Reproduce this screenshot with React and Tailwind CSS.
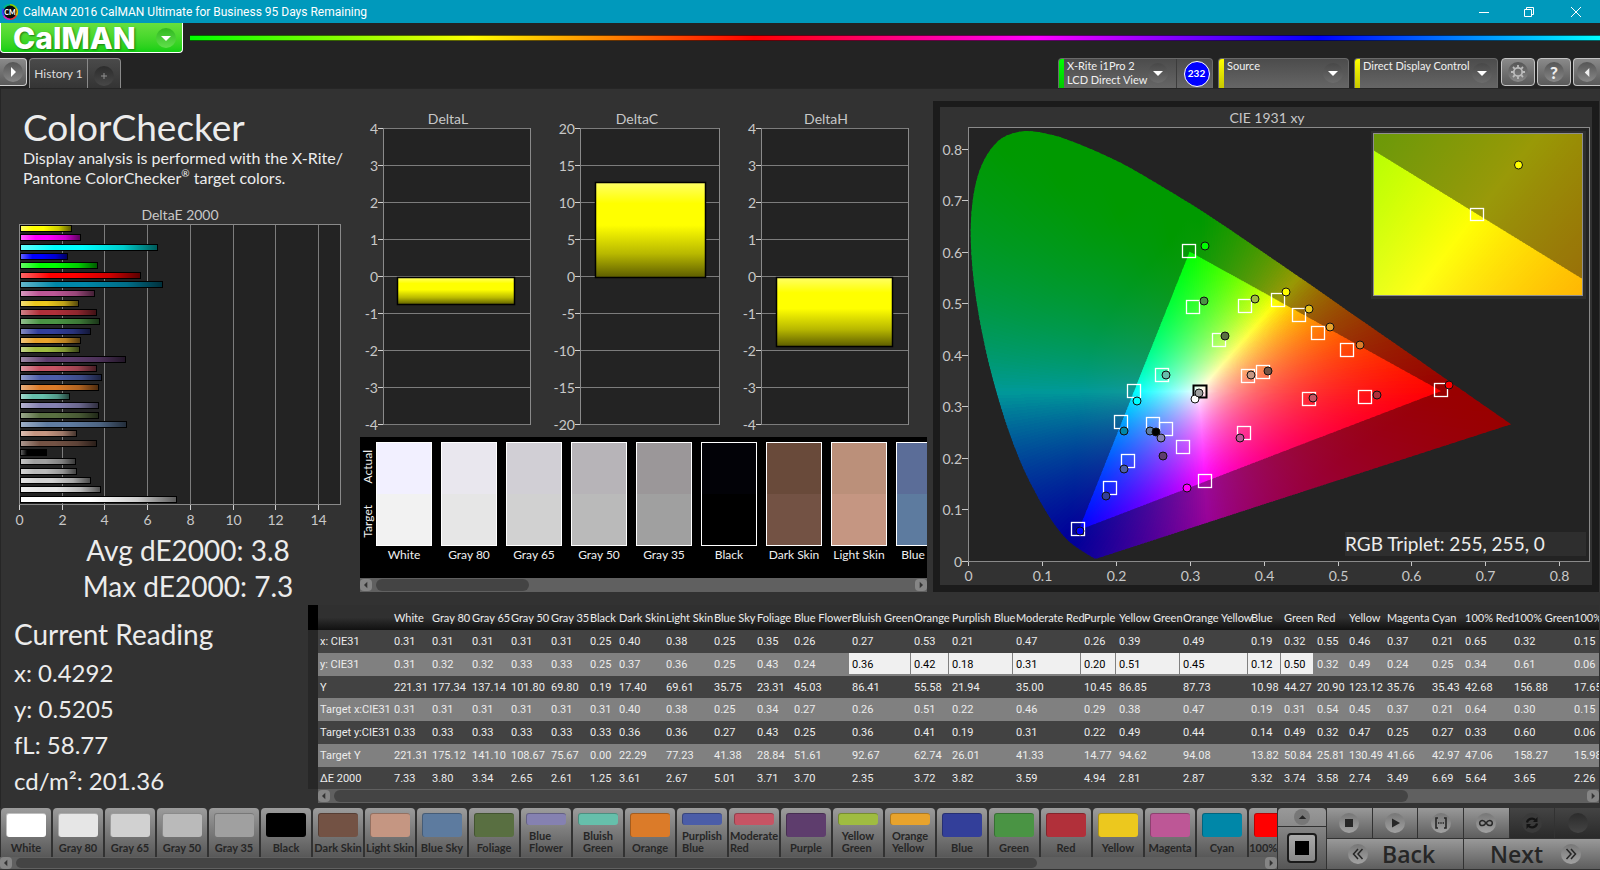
import React from "react";

/* ---------- data ---------- */

const COLUMNS = [
  { name: "White", w: "w-[38px]", v: ["0.31", "0.31", "221.31", "0.31", "0.33", "221.31", "7.33"] },
  { name: "Gray 80", w: "w-[40px]", v: ["0.31", "0.32", "177.34", "0.31", "0.33", "175.12", "3.80"] },
  { name: "Gray 65", w: "w-[39px]", v: ["0.31", "0.32", "137.14", "0.31", "0.33", "141.10", "3.34"] },
  { name: "Gray 50", w: "w-[40px]", v: ["0.31", "0.33", "101.80", "0.31", "0.33", "108.67", "2.65"] },
  { name: "Gray 35", w: "w-[39px]", v: ["0.31", "0.33", "69.80", "0.31", "0.33", "75.67", "2.61"] },
  { name: "Black", w: "w-[29px]", v: ["0.25", "0.25", "0.19", "0.31", "0.33", "0.00", "1.25"] },
  { name: "Dark Skin", w: "w-[47px]", v: ["0.40", "0.37", "17.40", "0.40", "0.36", "22.29", "3.61"] },
  { name: "Light Skin", w: "w-[48px]", v: ["0.38", "0.36", "69.61", "0.38", "0.36", "77.23", "2.67"] },
  { name: "Blue Sky", w: "w-[43px]", v: ["0.25", "0.25", "35.75", "0.25", "0.27", "41.38", "5.01"] },
  { name: "Foliage", w: "w-[37px]", v: ["0.35", "0.43", "23.31", "0.34", "0.43", "28.84", "3.71"] },
  { name: "Blue Flower", w: "w-[58px]", v: ["0.26", "0.24", "45.03", "0.27", "0.25", "51.61", "3.70"] },
  { name: "Bluish Green", w: "w-[62px]", sel: true, v: ["0.27", "0.36", "86.41", "0.26", "0.36", "92.67", "2.35"] },
  { name: "Orange", w: "w-[38px]", sel: true, v: ["0.53", "0.42", "55.58", "0.51", "0.41", "62.74", "3.72"] },
  { name: "Purplish Blue", w: "w-[64px]", sel: true, v: ["0.21", "0.18", "21.94", "0.22", "0.19", "26.01", "3.82"] },
  { name: "Moderate Red", w: "w-[68px]", sel: true, v: ["0.47", "0.31", "35.00", "0.46", "0.31", "41.33", "3.59"] },
  { name: "Purple", w: "w-[35px]", sel: true, v: ["0.26", "0.20", "10.45", "0.29", "0.22", "14.77", "4.94"] },
  { name: "Yellow Green", w: "w-[64px]", sel: true, v: ["0.39", "0.51", "86.85", "0.38", "0.49", "94.62", "2.81"] },
  { name: "Orange Yellow", w: "w-[68px]", sel: true, v: ["0.49", "0.45", "87.73", "0.47", "0.44", "94.08", "2.87"] },
  { name: "Blue", w: "w-[33px]", sel: true, v: ["0.19", "0.12", "10.98", "0.19", "0.14", "13.82", "3.32"] },
  { name: "Green", w: "w-[33px]", sel: true, v: ["0.32", "0.50", "44.27", "0.31", "0.49", "50.84", "3.74"] },
  { name: "Red", w: "w-[32px]", v: ["0.55", "0.32", "20.90", "0.54", "0.32", "25.81", "3.58"] },
  { name: "Yellow", w: "w-[38px]", v: ["0.46", "0.49", "123.12", "0.45", "0.47", "130.49", "2.74"] },
  { name: "Magenta", w: "w-[45px]", v: ["0.37", "0.24", "35.76", "0.37", "0.25", "41.66", "3.49"] },
  { name: "Cyan", w: "w-[33px]", v: ["0.21", "0.25", "35.43", "0.21", "0.27", "42.97", "6.69"] },
  { name: "100% Red", w: "w-[49px]", v: ["0.65", "0.34", "42.68", "0.64", "0.33", "47.06", "5.64"] },
  { name: "100% Green", w: "w-[60px]", v: ["0.32", "0.61", "156.88", "0.30", "0.60", "158.27", "3.65"] },
  { name: "100% Blue", w: "w-[60px]", v: ["0.15", "0.06", "17.65", "0.15", "0.06", "15.98", "2.26"] },
];

const ROWS = [
  { label: "x: CIE31", cls: "h-[23px] bg-[#424242]" },
  { label: "y: CIE31", cls: "h-[23px] bg-[#808080]" },
  { label: "Y", cls: "h-[22px] bg-[#424242]" },
  { label: "Target x:CIE31", cls: "h-[23px] bg-[#808080]" },
  { label: "Target y:CIE31", cls: "h-[23px] bg-[#424242]" },
  { label: "Target Y", cls: "h-[23px] bg-[#808080]" },
  { label: "ΔE 2000", cls: "h-[22px] bg-[#424242]" },
];

const DELTA_E = [
  ["#ffff00", 2.43], ["#ff00ff", 2.87], ["#00ffff", 6.48], ["#0000ff", 2.26], ["#00ff00", 3.65],
  ["#ff0000", 5.64], ["#0087a8", 6.69], ["#bd5796", 3.49], ["#ecc81e", 2.74], ["#b1303a", 3.58],
  ["#4a9444", 3.74], ["#333f9a", 3.32], ["#e8a32c", 2.87], ["#9fbc41", 2.81], ["#5e3d6d", 4.94],
  ["#c65464", 3.59], ["#4b5da8", 3.82], ["#db7b29", 3.72], ["#66bfab", 2.35], ["#8581b1", 3.7],
  ["#596f41", 3.71], ["#607da2", 5.01], ["#c59682", 2.67], ["#735244", 3.61], ["#000000", 1.25],
  ["#a0a0a0", 2.61], ["#bababa", 2.65], ["#d1d1d1", 3.34], ["#e6e6e6", 3.8], ["#ffffff", 7.33],
];

const PATCHES = [
  { name: "White", c: "bg-white" },
  { name: "Gray 80", c: "bg-[#e6e6e6]" },
  { name: "Gray 65", c: "bg-[#d1d1d1]" },
  { name: "Gray 50", c: "bg-[#bababa]" },
  { name: "Gray 35", c: "bg-[#a0a0a0]" },
  { name: "Black", c: "bg-black" },
  { name: "Dark Skin", c: "bg-[#735244]" },
  { name: "Light Skin", c: "bg-[#c59682]" },
  { name: "Blue Sky", c: "bg-[#5d7b9f]" },
  { name: "Foliage", c: "bg-[#596f41]" },
  { name: "Blue Flower", c: "bg-[#8581b1]", two: true },
  { name: "Bluish Green", c: "bg-[#66bfab]", two: true },
  { name: "Orange", c: "bg-[#db7b29]" },
  { name: "Purplish Blue", c: "bg-[#4b5da8]", two: true },
  { name: "Moderate Red", c: "bg-[#c65464]", two: true },
  { name: "Purple", c: "bg-[#5e3d6d]" },
  { name: "Yellow Green", c: "bg-[#9fbc41]", two: true },
  { name: "Orange Yellow", c: "bg-[#e8a32c]", two: true },
  { name: "Blue", c: "bg-[#333f9a]" },
  { name: "Green", c: "bg-[#4a9444]" },
  { name: "Red", c: "bg-[#b1303a]" },
  { name: "Yellow", c: "bg-[#ecc81e]" },
  { name: "Magenta", c: "bg-[#bd5796]" },
  { name: "Cyan", c: "bg-[#0087a8]" },
  { name: "100% Red", c: "bg-[#ff0000]" },
];

const SWATCHES = [
  { name: "White", a: "bg-[#f2f0ff]", t: "bg-[#f2f2f2]" },
  { name: "Gray 80", a: "bg-[#e9e7ee]", t: "bg-[#e6e6e6]" },
  { name: "Gray 65", a: "bg-[#d1cfd5]", t: "bg-[#d1d1d1]" },
  { name: "Gray 50", a: "bg-[#b7b4b8]", t: "bg-[#bababa]" },
  { name: "Gray 35", a: "bg-[#9b9799]", t: "bg-[#a0a0a0]" },
  { name: "Black", a: "bg-[#020207]", t: "bg-black" },
  { name: "Dark Skin", a: "bg-[#694a3a]", t: "bg-[#735244]" },
  { name: "Light Skin", a: "bg-[#bb907a]", t: "bg-[#c59682]" },
  { name: "Blue Sky", a: "bg-[#5b6d98]", t: "bg-[#5d7b9f]" },
];

const TARGETS = [
  [249, 144], [253, 200], [305, 199], [279, 233], [222, 268], [194, 284], [181, 315], [213, 317],
  [226, 322], [243, 340], [188, 354], [170, 381], [138, 422], [265, 374], [304, 326], [308, 269],
  [323, 265], [338, 193], [359, 208], [378, 226], [407, 243], [501, 283], [425, 290], [369, 292],
];

const READINGS = [
  [265, 139, "#00ff00"], [264, 194, "#4a9444"], [315, 192, "#9fbc41"], [285, 229, "#596f41"],
  [226, 268, "#66bfab"], [197, 294, "#00ffff"], [184, 324, "#0087a8"], [210, 324, "#607da2"],
  [216, 325, "#000000"], [221, 331, "#8581b1"], [223, 349, "#5e3d6d"], [184, 362, "#4b5da8"],
  [166, 389, "#333f9a"], [140, 424, "#0000ff"], [247, 381, "#ff00ff"], [300, 331, "#bd5796"],
  [311, 268, "#c59682"], [328, 264, "#735244"], [255, 292, "#ffffff"], [259, 286, "#a0a0a0"],
  [346, 185, "#ffff00"], [369, 202, "#ecc81e"], [390, 220, "#e8a32c"], [420, 238, "#db7b29"],
  [509, 278, "#ff0000"], [437, 288, "#b1303a"], [373, 291, "#c65464"],
];

/* ---------- chromaticity geometry ---------- */

const OX = 28;
const OY = 454;
const SX = 739;
const SY = 515.5;
const toPx = ([x, y]) => [OX + x * SX, OY - y * SY];
const WHITE_POINT = toPx([0.3127, 0.329]);
const TRIANGLE = [[0.64, 0.33], [0.3, 0.6], [0.15, 0.06]].map(toPx);

const LOCUS = [
  [0.1741, 0.005], [0.1714, 0.0051], [0.1689, 0.0069], [0.1644, 0.0109], [0.1566, 0.0177],
  [0.144, 0.0297], [0.1355, 0.0399], [0.1241, 0.0578], [0.1096, 0.0868], [0.0913, 0.1327],
  [0.0687, 0.2007], [0.0454, 0.295], [0.0235, 0.4127], [0.0082, 0.5384], [0.0039, 0.6548],
  [0.0139, 0.7502], [0.0389, 0.812], [0.0743, 0.8338], [0.1142, 0.8262], [0.1547, 0.8059],
  [0.1929, 0.7816], [0.2296, 0.7543], [0.3016, 0.6923], [0.3731, 0.6245], [0.4441, 0.5547],
  [0.5125, 0.4866], [0.5752, 0.4242], [0.627, 0.3725], [0.6658, 0.334], [0.6915, 0.3083],
  [0.7347, 0.2653],
].map(toPx);

function smoothPath(pts) {
  let d = `M${pts[0][0].toFixed(1)} ${pts[0][1].toFixed(1)}`;
  for (let i = 0; i < pts.length - 1; i++) {
    const p0 = pts[i - 1] || pts[i];
    const p1 = pts[i];
    const p2 = pts[i + 1];
    const p3 = pts[i + 2] || p2;
    const c = [
      p1[0] + (p2[0] - p0[0]) / 6, p1[1] + (p2[1] - p0[1]) / 6,
      p2[0] - (p3[0] - p1[0]) / 6, p2[1] - (p3[1] - p1[1]) / 6,
      p2[0], p2[1],
    ].map((n) => n.toFixed(1));
    d += `C${c.join(" ")}`;
  }
  return d + "Z";
}
const LOCUS_PATH = smoothPath(LOCUS);

function colorAt(px, py, level) {
  const x = (px - OX) / SX;
  const y = Math.max((OY - py) / SY, 0.002);
  const X = x / y;
  const Z = (1 - x - y) / y;
  const lin = [
    3.2406 * X - 1.5372 - 0.4986 * Z,
    -0.9689 * X + 1.8758 + 0.0415 * Z,
    0.0557 * X - 0.204 + 1.057 * Z,
  ].map((c) => Math.max(c, 0));
  const m = Math.max(...lin, 1e-6);
  return `rgb(${lin.map((c) => Math.round((255 * level * c) / m)).join(",")})`;
}

function edgeDistance(a) {
  const [wx, wy] = WHITE_POINT;
  const dx = Math.cos(a);
  const dy = Math.sin(a);
  let best = 1e9;
  TRIANGLE.forEach((p, i) => {
    const q = TRIANGLE[(i + 1) % 3];
    const ex = q[0] - p[0];
    const ey = q[1] - p[1];
    const det = dx * ey - dy * ex;
    if (Math.abs(det) < 1e-9) return;
    const t = ((p[0] - wx) * ey - (p[1] - wy) * ex) / det;
    const s = ((p[0] - wx) * dy - (p[1] - wy) * dx) / det;
    if (t > 0 && s >= -1e-6 && s <= 1 + 1e-6) best = Math.min(best, t);
  });
  return best;
}

function Wedges({ id, from = 0, to = 360, step = 1, level, inner }) {
  const [wx, wy] = WHITE_POINT;
  const items = [];
  for (let deg = from; deg < to; deg += step) {
    const mid = ((deg + step / 2) * Math.PI) / 180;
    const edge = edgeDistance(mid);
    const r0 = inner ? 0 : edge * 0.85;
    const r1 = inner ? edge + 4 : 560;
    const n = inner ? 12 : 8;
    const at = (r, a) => [wx + r * Math.cos(a), wy + r * Math.sin(a)];
    const stops = [];
    for (let k = 0; k <= n; k++) {
      const r = r0 + ((r1 - r0) * k) / n;
      const [x, y] = at(r, mid);
      stops.push(<stop key={k} offset={k / n} stopColor={colorAt(x, y, level)} />);
    }
    const g0 = at(r0, mid);
    const g1 = at(r1, mid);
    const a0 = (deg * Math.PI) / 180;
    const a1 = ((deg + step * 1.4) * Math.PI) / 180;
    const reach = inner ? r1 * 1.15 : r1;
    const key = `${id}-${items.length}`;
    items.push(
      <g key={key}>
        <linearGradient id={key} gradientUnits="userSpaceOnUse" x1={g0[0]} y1={g0[1]} x2={g1[0]} y2={g1[1]}>
          {stops}
        </linearGradient>
        <polygon
          points={[[wx, wy], at(reach, a0), at(reach, a1)].map((p) => p.map((c) => c.toFixed(2)).join(",")).join(" ")}
          fill={`url(#${key})`}
        />
      </g>
    );
  }
  return <g shapeRendering="crispEdges">{items}</g>;
}

/* ---------- charts ---------- */

const TRI_POINTS = TRIANGLE.map((p) => p.join(",")).join(" ");

function CieChart() {
  const zoomCenter = toPx([0.4193, 0.5053]);
  return (
    <svg viewBox="0 0 652 478" className="block w-full" role="img" aria-label="CIE 1931 xy chart">
      <defs>
        <clipPath id="locus"><path d={LOCUS_PATH} /></clipPath>
        <clipPath id="gamut"><polygon points={TRI_POINTS} /></clipPath>
        <clipPath id="inset"><rect x="434" y="27" width="208" height="162" /></clipPath>
      </defs>
      <text x="327" y="16" textAnchor="middle" fontSize="14" fill="#c8c8c8">CIE 1931 xy</text>
      <rect x="28.5" y="20.5" width="621" height="434" fill="#232323" stroke="#8a8a8a" />
      <g clipPath="url(#locus)"><Wedges id="out" level={0.6} /></g>
      <g clipPath="url(#gamut)"><Wedges id="in" level={1} inner /></g>

      {[0, 1, 2, 3, 4, 5, 6, 7, 8].map((i) => {
        const label = i === 0 ? "0" : `0.${i}`;
        const x = Math.round(OX + i * 73.9) + 0.5;
        const y = Math.round(OY - i * 51.55) + 0.5;
        return (
          <g key={i} fill="#c8c8c8" fontSize="14">
            <path d={`M${x} 455v4M22 ${y}h6`} stroke="#c8c8c8" />
            <text x={x} y="474" textAnchor="middle">{label}</text>
            <text x="22" y={y + 5} textAnchor="end">{label}</text>
          </g>
        );
      })}

      <g fill="none" stroke="#fff" strokeWidth="1.3">
        {TARGETS.map(([x, y], i) => <rect key={i} x={x - 6.5} y={y - 6.5} width="13" height="13" />)}
      </g>
      <rect x="253.5" y="278.5" width="13" height="12" fill="none" stroke="#000" strokeWidth="2" />
      <g stroke="#111">
        {READINGS.map(([x, y, c], i) => <circle key={i} cx={x} cy={y} r="4" fill={c} />)}
      </g>

      <rect x="431" y="24" width="215" height="168" fill="#2e2e2e" />
      <g clipPath="url(#inset)">
        <g transform={`translate(537 107) scale(5.67 6.3) translate(${-zoomCenter[0]} ${-zoomCenter[1]})`}>
          <Wedges id="zout" level={0.6} from={292} to={335} step={0.25} />
          <g clipPath="url(#gamut)"><Wedges id="zin" level={1} from={292} to={335} step={0.25} inner /></g>
        </g>
      </g>
      <rect x="433.5" y="26.5" width="209" height="162" fill="none" stroke="#8f8f8f" />
      <rect x="530.5" y="101.5" width="13" height="12" fill="none" stroke="#fff" strokeWidth="1.3" />
      <circle cx="578.5" cy="58" r="4" fill="#ffff00" stroke="#111" />

      <rect x="405" y="425" width="241" height="24" fill="#2e2e2e" />
      <text x="405" y="444" fontSize="19" fill="#ececec">RGB Triplet: 255, 255, 0</text>
    </svg>
  );
}

function DeltaEChart() {
  const unit = 21.37;
  return (
    <svg viewBox="1 0 352 326" className="block w-full" role="img" aria-label="DeltaE 2000 chart">
      <defs>
        <linearGradient id="barShade">
          <stop offset="0" stopColor="#fff" stopOpacity=".4" />
          <stop offset=".25" stopColor="#fff" stopOpacity="0" />
          <stop offset=".45" stopColor="#000" stopOpacity="0" />
          <stop offset=".75" stopColor="#000" stopOpacity=".2" />
          <stop offset="1" stopColor="#000" stopOpacity=".65" />
        </linearGradient>
      </defs>
      <text x="180" y="16" textAnchor="middle" fontSize="14" fill="#c8c8c8">DeltaE 2000</text>
      <rect x="19.5" y="20.5" width="321" height="280" fill="#232323" stroke="#8a8a8a" />
      {[0, 2, 4, 6, 8, 10, 12, 14].map((t) => {
        const x = Math.round(19 + t * unit) + 0.5;
        return (
          <g key={t}>
            {t > 0 && <path d={`M${x} 21V300`} stroke="#7c7c7c" />}
            <path d={`M${x} 301v5`} stroke="#d0d0d0" />
            <text x={x} y="321" textAnchor="middle" fontSize="14" fill="#c8c8c8">{t}</text>
          </g>
        );
      })}
      {DELTA_E.map(([c, v], i) => {
        const y = Math.round(21 + i * 9.33) + 0.5;
        const width = Math.round(v * unit) - 1;
        return (
          <g key={i} stroke="#000">
            <rect x="20.5" y={y} width={width} height="6" fill={c} />
            <rect x="20.5" y={y} width={width} height="6" fill="url(#barShade)" />
          </g>
        );
      })}
    </svg>
  );
}

function DeltaChart({ title, max, left, bar }) {
  const top = 20.5;
  const height = 296;
  return (
    <svg viewBox="0 0 189 325" className="block min-w-0 flex-1" role="img" aria-label={`${title} chart`}>
      <defs>
        <linearGradient id={`yellow-${title}`} x2="0" y2="1">
          <stop offset="0" stopColor="#ffff66" />
          <stop offset=".22" stopColor="#ffff00" />
          <stop offset=".45" stopColor="#ffff00" />
          <stop offset=".75" stopColor="#b8b800" />
          <stop offset="1" stopColor="#5c5c00" />
        </linearGradient>
      </defs>
      <text x="95" y="16" textAnchor="middle" fontSize="14" fill="#c8c8c8">{title}</text>
      <rect x={left + 0.5} y={top} width={177 - left} height={height} fill="#232323" stroke="#8a8a8a" />
      {[4, 3, 2, 1, 0, -1, -2, -3, -4].map((t, i) => {
        const y = top + i * 37;
        return (
          <g key={t}>
            <path d={`M${left + 1} ${y}H177`} stroke="#7c7c7c" />
            <path d={`M${left - 5} ${y}h5`} stroke="#d0d0d0" />
            <text x={left - 5} y={y + 5} textAnchor="end" fontSize="14" fill="#c8c8c8">{(t * max) / 4}</text>
          </g>
        );
      })}
      <rect x={bar[0] + 0.5} y={bar[1] + 0.5} width={bar[2]} height={bar[3]} fill={`url(#yellow-${title})`} stroke="#000" strokeWidth="1.5" />
    </svg>
  );
}

/* ---------- small parts ---------- */

function Disc({ size = "size-5", className = "", children }) {
  return (
    <span className={`flex shrink-0 items-center justify-center rounded-full ${size} ${className}`}>{children}</span>
  );
}

function Caret({ dir = "down", className = "size-3" }) {
  const d = { down: "M1 4h10l-5 5z", up: "M1 8h10l-5-5z", left: "M8 1v10l-5-5z", right: "M4 1v10l5-5z" }[dir];
  return <svg viewBox="0 0 12 12" className={className} fill="currentColor" aria-hidden="true"><path d={d} /></svg>;
}

function ScrollBar({ className = "", label, thumb }) {
  return (
    <div className={`flex items-center bg-[#606060] ${className}`}>
      <button aria-label={`Scroll ${label} left`} className="flex size-3 shrink-0 items-center justify-center rounded-sm bg-[#858585] text-[#333]">
        <Caret dir="left" className="size-2" />
      </button>
      <div className="mx-1 flex h-full min-w-0 flex-1 items-center">
        <div className={`rounded-full bg-[#444] ${thumb}`} />
      </div>
      <button aria-label={`Scroll ${label} right`} className="flex size-3 shrink-0 items-center justify-center rounded-sm bg-[#858585] text-[#333]">
        <Caret dir="right" className="size-2" />
      </button>
    </div>
  );
}

const DARK_DISC = "bg-linear-to-b from-[#484848] to-[#6c6c6c] text-white";

function DeviceTab({ width, strip, children, after, caret = "mr-[5px]" }) {
  return (
    <div className={`flex h-[30px] overflow-hidden rounded-t border border-b-0 border-[#6a6a6a] bg-linear-to-b from-[#4c4c4c] to-[#666] ${width}`}>
      <button aria-haspopup="menu" className="flex min-w-0 flex-1 items-start text-left text-[11px] leading-[14px] text-[#f0f0f0]">
        <span className={`h-full w-[5px] shrink-0 ${strip}`} />
        <span className="min-w-0 flex-1 whitespace-nowrap pl-[3px]">{children}</span>
        <Disc className={`mt-1 ${caret} ${DARK_DISC}`}><Caret /></Disc>
      </button>
      {after}
    </div>
  );
}

function SquareButton({ label, children, shape = "w-[34px] rounded border" }) {
  return (
    <button aria-label={label} className={`flex h-7 shrink-0 items-center justify-center border-[#c4c4c4] bg-linear-to-b from-[#8a8a8a] to-[#5a5a5a] ${shape}`}>
      <Disc className="bg-linear-to-b from-[#555] to-[#888] text-[#eee]">{children}</Disc>
    </button>
  );
}

function TitleBar() {
  return (
    <header className="flex h-[23px] shrink-0 items-center bg-[#0099bc] text-white">
      <svg viewBox="0 0 16 16" className="ml-[2px] size-4" aria-hidden="true">
        <g fill="none" strokeWidth="2">
          <path d="M8 1a7 7 0 0 1 6.1 3.5" stroke="#8bd000" />
          <path d="M14.1 4.5a7 7 0 0 1 0 7" stroke="#e8c000" />
          <path d="M14.1 11.5A7 7 0 0 1 8 15" stroke="#f03030" />
          <path d="M8 15a7 7 0 0 1-6.1-3.5" stroke="#e020c0" />
          <path d="M1.9 11.5a7 7 0 0 1 0-7" stroke="#4040ff" />
          <path d="M1.9 4.5A7 7 0 0 1 8 1" stroke="#00c080" />
        </g>
        <circle cx="8" cy="8" r="6.4" fill="#0a0a0a" />
        <text x="8" y="10.5" textAnchor="middle" fontSize="7" fontWeight="900" fill="#fff">CM</text>
      </svg>
      <h1 className="ml-[5px] font-['Roboto',sans-serif] text-[12px]">CalMAN 2016 CalMAN Ultimate for Business 95 Days Remaining</h1>
      <div className="ml-auto flex h-full">
        <button aria-label="Minimize" className="flex h-full w-[44px] items-center justify-center">
          <svg viewBox="0 0 10 10" className="size-[10px]" stroke="currentColor"><path d="M0 5.5h10" /></svg>
        </button>
        <button aria-label="Restore" className="flex h-full w-[46px] items-center justify-center">
          <svg viewBox="0 0 10 10" className="size-[10px]" fill="none" stroke="currentColor"><path d="M.5 2.5h7v7h-7zM2.5 2.5v-2h7v7h-2" /></svg>
        </button>
        <button aria-label="Close" className="flex h-full w-[48px] items-center justify-center">
          <svg viewBox="0 0 10 10" className="size-[10px]" stroke="currentColor"><path d="M0 0l10 10M10 0L0 10" /></svg>
        </button>
      </div>
    </header>
  );
}

function TopBar() {
  return (
    <>
      <div className="flex h-[30px] items-center bg-[#232323]">
        <button className="flex h-[30px] w-[183px] shrink-0 items-center rounded-b border border-t-0 border-white bg-linear-to-b from-[#66e03e] to-[#0fcf12] pl-3 font-['Inter',sans-serif] text-[30px] font-extrabold leading-none text-white [text-shadow:1px_1px_2px_#1a7a10]">
          CalMAN
          <Disc className="mr-[6px] ml-auto bg-linear-to-b from-[#2fb81e] to-[#5fe04a]"><Caret /></Disc>
        </button>
        <div className="ml-[7px] h-[6px] flex-1 border-y border-black/60 bg-[linear-gradient(90deg,#0f0,#ff0,#f00,#f0f,#00f,#0ff)]" />
      </div>
      <div className="flex h-[35px] items-start bg-[#232323] pt-[5px]">
        <button aria-label="Expand" className="flex h-7 w-[27px] items-center justify-center rounded-r border border-l-0 border-[#d0d0d0] bg-linear-to-b from-[#8a8a8a] to-[#5a5a5a]">
          <Disc className="bg-linear-to-b from-[#555] to-[#888] text-white"><Caret dir="right" /></Disc>
        </button>
        <div className="ml-[2px] flex h-[30px] rounded-t border border-b-0 border-[#8a8a8a] bg-linear-to-b from-[#4a4a4a] to-[#343434]">
          <button className="w-[57px] whitespace-nowrap text-[12px] text-[#dcdcdc]">History 1</button>
          <button aria-label="Add history" className="flex w-[33px] items-center justify-center border-l border-[#8a8a8a]">
            <Disc className="mt-1 bg-linear-to-b from-[#2c2c2c] to-[#484848] text-[#909090]">
              <svg viewBox="0 0 8 8" className="size-2" stroke="currentColor"><path d="M4 1v6M1 4h6" /></svg>
            </Disc>
          </button>
        </div>
        <div className="ml-auto flex items-start">
          <DeviceTab
            width="w-[155px]"
            strip="bg-linear-to-b from-[#00ff00] to-[#00c800]"
            caret="mr-2"
            after={
              <span className="flex w-[36px] items-center justify-center border-l border-[#3c3c3c] pl-1">
                <span className="flex size-[26px] items-center justify-center rounded-full border border-white bg-[#0000ff] text-[10px] font-bold text-white">232</span>
              </span>
            }
          >
            X-Rite i1Pro 2<br />LCD Direct View
          </DeviceTab>
          <div className="w-[5px]" />
          <DeviceTab width="w-[131px]" strip="bg-linear-to-b from-[#ffff00] to-[#c8c800]">Source</DeviceTab>
          <div className="w-[5px]" />
          <DeviceTab width="w-[144px]" strip="bg-linear-to-b from-[#ffff00] to-[#c8c800]">Direct Display Control</DeviceTab>
          <div className="ml-[3px] flex gap-[2px]">
            <SquareButton label="Settings">
              <svg viewBox="0 0 16 16" className="size-4" fill="none" stroke="#bbb" strokeWidth="1.8">
                <circle cx="8" cy="8" r="4.2" />
                <path d="M8 1v2.4M8 12.6V15M1 8h2.4M12.6 8H15M3 3l1.8 1.8M11.2 11.2L13 13M3 13l1.8-1.8M11.2 4.8L13 3" />
              </svg>
            </SquareButton>
            <SquareButton label="Help"><span className="text-[17px] font-black leading-none">?</span></SquareButton>
            <SquareButton label="Collapse" shape="w-[27px] rounded-l border border-r-0"><Caret dir="left" className="size-[11px]" /></SquareButton>
          </div>
        </div>
      </div>
    </>
  );
}

function SwatchStrip() {
  return (
    <section aria-label="Actual and target swatches" className="ml-[7px] mr-[3px] mt-1">
      <div className="flex h-[141px] overflow-hidden bg-black pt-[5px] text-[12px] text-[#f0f0f0]">
        <div className="flex h-[104px] w-4 shrink-0 flex-col items-center justify-between py-2">
          <span className="rotate-180 leading-4 [writing-mode:vertical-rl]">Actual</span>
          <span className="rotate-180 leading-4 [writing-mode:vertical-rl]">Target</span>
        </div>
        <div className="flex gap-[9px]">
          {SWATCHES.map((s) => (
            <figure key={s.name} className="w-14 shrink-0">
              <div className="flex h-[104px] flex-col border border-white">
                <div className={`flex-1 ${s.a}`} />
                <div className={`flex-1 ${s.t}`} />
              </div>
              <figcaption className="whitespace-nowrap text-center leading-[18px]">{s.name}</figcaption>
            </figure>
          ))}
        </div>
      </div>
      <ScrollBar label="swatches" className="h-[14px]" thumb="h-3 w-[153px]" />
    </section>
  );
}

function DataTable() {
  return (
    <section className="min-w-0 flex-1 overflow-hidden pr-px">
      <div className="overflow-hidden">
        <table className="w-[1323px] table-fixed border-collapse font-['Roboto',sans-serif] text-[11px] leading-none text-[#ececec]">
          <colgroup>
            <col className="w-[10px]" />
            <col className="w-[73px]" />
            {COLUMNS.map((c) => <col key={c.name} className={c.w} />)}
          </colgroup>
          <thead>
            <tr className="h-[25px] bg-linear-to-b from-[#303030] from-50% to-[#111] text-left font-['Lato',sans-serif]">
              <td className="bg-black" />
              <td />
              {COLUMNS.map((c) => <th key={c.name} scope="col" className="whitespace-nowrap pl-[3px] font-normal">{c.name}</th>)}
            </tr>
          </thead>
          <tbody>
            {ROWS.map((row, r) => (
              <tr key={row.label} className={row.cls}>
                <td className="bg-[#272727]" />
                <th scope="row" className="whitespace-nowrap pl-[2px] text-left font-normal">{row.label}</th>
                {COLUMNS.map((c) => (
                  <td key={c.name} className={r === 1 && c.sel ? "bg-[#f0f0f0] pl-[3px] text-black shadow-[inset_-1px_-2px_0_#808080]" : "pl-[3px]"}>{c.v[r]}</td>
                ))}
              </tr>
            ))}
          </tbody>
        </table>
      </div>
      <ScrollBar label="table" className="ml-[10px] h-[14px]" thumb="h-3 w-[86%]" />
    </section>
  );
}

function PatchBar() {
  return (
    <section aria-label="Patches" className="flex min-w-0 flex-1 flex-col overflow-hidden">
      <div className="flex gap-[2px] overflow-hidden pl-px">
        {PATCHES.map((p) => (
          <button key={p.name} className="flex h-[49px] w-[50px] shrink-0 flex-col items-center rounded-t bg-linear-to-b from-[#9c9c9c] to-[#585858] pt-[5px] text-[11px] font-bold leading-[12px] text-[#262626]">
            <span className={`w-10 shrink-0 rounded-[3px] border-t border-l border-black/25 ${p.two ? "h-3" : "h-6"} ${p.c}`} />
            {p.two ? (
              <span className="mt-[5px] text-left">{p.name.split(" ")[0]}<br />{p.name.split(" ")[1]}</span>
            ) : (
              <span className="mt-[5px] whitespace-nowrap">{p.name}</span>
            )}
          </button>
        ))}
      </div>
      <ScrollBar label="patches" className="h-3" thumb="h-[10px] w-[82%]" />
    </section>
  );
}

const LIT = "bg-linear-to-b from-[#999] to-[#5e5e5e]";
const LIT_DISC = "bg-linear-to-b from-[#777] to-[#a2a2a2] text-[#262626]";

function Transport() {
  const icons = [
    ["Stop", <rect key="s" x="4" y="4" width="8" height="8" fill="currentColor" />],
    ["Play", <path key="p" d="M5 3.5v9l8-4.5z" fill="currentColor" />],
    ["Read series", <path key="r" d="M5 3H3v10h2M11 3h2v10h-2M5 8h1.4M7.3 8h1.4M9.6 8H11" fill="none" stroke="currentColor" strokeWidth="1.6" />],
    ["Read continuous", <path key="c" d="M8 8C6.6 6 5.6 5.4 4.3 5.4a2.6 2.6 0 0 0 0 5.2C5.6 10.6 6.6 10 8 8s2.4-2.6 3.7-2.6a2.6 2.6 0 0 1 0 5.2C10.4 10.6 9.4 10 8 8z" fill="none" stroke="currentColor" strokeWidth="1.5" />],
  ];
  return (
    <div className="flex shrink-0 gap-px pl-px">
      <div className="flex w-12 flex-col gap-px">
        <button aria-label="Expand patches" className="flex h-[18px] items-center justify-center rounded-t bg-linear-to-b from-[#999] to-[#8a8a8a]">
          <Disc size="size-4" className="bg-[#777] text-[#262626]"><Caret dir="up" className="size-[9px]" /></Disc>
        </button>
        <button aria-label="Pattern window" className="flex h-[42px] items-center justify-center bg-linear-to-b from-[#858585] to-[#565656]">
          <span className="flex size-[30px] items-center justify-center rounded border-2 border-[#1a1a1a] bg-linear-to-b from-[#aaa] to-[#888]">
            <span className="size-[14px] bg-black" />
          </span>
        </button>
      </div>
      <div className="grid w-[273px] grid-cols-6 grid-rows-[30px_30px] gap-px">
        {icons.map(([label, shape]) => (
          <button key={label} aria-label={label} className={`flex items-center justify-center ${LIT}`}>
            <Disc className={LIT_DISC}><svg viewBox="0 0 16 16" className="size-4">{shape}</svg></Disc>
          </button>
        ))}
        <button aria-label="Refresh" disabled className="flex items-center justify-center bg-linear-to-b from-[#444] to-[#2a2a2a]">
          <Disc className="bg-[#3a3a3a] text-[#141414]">
            <svg viewBox="0 0 16 16" className="size-4" fill="none" stroke="currentColor" strokeWidth="2.2">
              <path d="M3 7.5A5 4.5 0 0 1 11.500 5M13 8.5A5 4.5 0 0 1 4.500 11" />
              <path d="M13.5 2v5H9zM2.5 14V9H7z" fill="currentColor" stroke="none" />
            </svg>
          </Disc>
        </button>
        <button aria-label="Record" disabled className="flex items-center justify-center bg-linear-to-b from-[#444] to-[#2a2a2a]">
          <Disc className="bg-linear-to-b from-[#2c2c2c] to-[#444]" />
        </button>
        <button className={`col-span-3 flex items-center pl-[21px] text-[23px] leading-none text-[#262626] ${LIT}`}>
          <Disc className={`mr-[14px] ${LIT_DISC}`}>
            <svg viewBox="0 0 12 12" className="size-3" fill="none" stroke="currentColor" strokeWidth="1.5"><path d="M6 1L1.5 6 6 11M10.5 1L6 6l4.500 5" /></svg>
          </Disc>
          <span className="font-['Open_Sans',sans-serif] font-semibold">Back</span>
        </button>
        <button className={`col-span-3 flex items-center justify-end pr-[19px] text-[23px] leading-none text-[#262626] ${LIT}`}>
          <span className="font-['Open_Sans',sans-serif] font-semibold">Next</span>
          <Disc className={`ml-[18px] ${LIT_DISC}`}>
            <svg viewBox="0 0 12 12" className="size-3" fill="none" stroke="currentColor" strokeWidth="1.5"><path d="M1.5 1L6 6l-4.500 5M6 1l4.500 5L6 11" /></svg>
          </Disc>
        </button>
      </div>
    </div>
  );
}

export default function App() {
  return (
    <div className="flex min-h-screen flex-col bg-[#232323] font-['Lato',sans-serif]">
      <TitleBar />
      <TopBar />
      <main className="flex flex-1 flex-col border-t border-l border-[#262626] bg-[#323232]">
        <div className="flex">
          <section className="w-[352px] shrink-0 pt-4 text-[#ececec]">
            <h2 className="pl-[22px] text-[37px] leading-[43px]">ColorChecker</h2>
            <p className="pl-[22px] text-[16px] leading-5">
              Display analysis is performed with the X-Rite/<br />
              Pantone ColorChecker<span className="align-text-top text-[10px] leading-none">®</span> target colors.
            </p>
            <div className="mt-4"><DeltaEChart /></div>
            <div className="pt-[2px] pl-[22px] text-center text-[28px] leading-9">
              <p>Avg dE2000: 3.8</p>
              <p>Max dE2000: 7.3</p>
            </div>
          </section>
          <section className="w-[577px] shrink-0 pt-[19px]">
            <div className="flex pr-[10px]">
              <DeltaChart title="DeltaL" max={4} left={30} bar={[44, 169, 117, 27]} />
              <DeltaChart title="DeltaC" max={20} left={38} bar={[53, 74, 110, 95]} />
              <DeltaChart title="DeltaH" max={4} left={30} bar={[45, 169, 116, 69]} />
            </div>
            <SwatchStrip />
          </section>
          <section className="mt-3 mr-px mb-auto ml-[3px] min-w-0 flex-1 border-[7px] border-t-[6px] border-[#1b1b1b] bg-[#323232]">
            <CieChart />
          </section>
        </div>
        <div className="mt-px flex items-start">
          <section className="w-[307px] shrink-0 pl-[13px] text-[24px] text-[#ececec]">
            <h3 className="pt-2 text-[28px] leading-[42px]">Current Reading</h3>
            <ul className="leading-9">
              <li>x: 0.4292</li>
              <li>y: 0.5205</li>
              <li>fL: 58.77</li>
              <li>cd/m²: 201.36</li>
            </ul>
          </section>
          <DataTable />
        </div>
      </main>
      <footer className="flex bg-[#323232] pb-px">
        <PatchBar />
        <Transport />
      </footer>
    </div>
  );
}
